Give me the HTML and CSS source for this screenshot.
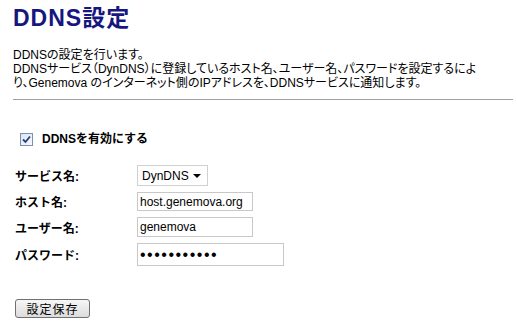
FILE: index.html
```html
<!DOCTYPE html>
<html lang="ja">
<head>
  <meta charset="UTF-8" />
  <title>DDNS設定</title>
  <link rel="stylesheet" href="styles.css">
</head>
<body>
  <h1 class="title">DDNS設定</h1>
  <p class="intro">
    DDNSの設定を行います。<br>
    DDNSサービス（DynDNS）に登録しているホスト名、ユーザー名、パスワードを設定するによ<br>
    り、Genemova のインターネット側のIPアドレスを、DDNSサービスに通知します。
  </p>
  <hr class="rule">

  <label class="enable">
    <input type="checkbox" checked>
    <span class="box">
      <svg width="9" height="9" viewBox="0 0 9 9"><path d="M1 4.5 L3.5 7 L8 1.5" fill="none" stroke="#1d3f8a" stroke-width="1.8"/></svg>
    </span>
    <span>DDNSを有効にする</span>
  </label>

  <div class="form">
    <div class="label">サービス名:</div>
    <div class="field">
      <span class="select">
        <select>
          <option>DynDNS</option>
        </select>
      </span>
    </div>

    <div class="label">ホスト名:</div>
    <div class="field"><input class="text host" type="text" value="host.genemova.org"></div>

    <div class="label">ユーザー名:</div>
    <div class="field"><input class="text user" type="text" value="genemova"></div>

    <div class="label">パスワード:</div>
    <div class="field"><input class="text pass" type="password" value="genemova123"></div>
  </div>

  <button class="save">設定保存</button>
</body>
</html>
```

FILE: styles.css
```css
body {
  margin: 0;
  padding: 5px 4px 0 13px;
  font-family: "Liberation Sans", "Noto Sans CJK JP", sans-serif;
  font-size: 12px;
  color: #000;
  background: #fff;
}
.title {
  margin: 0;
  font-size: 23px;
  line-height: 26px;
  font-weight: bold;
  letter-spacing: 1px;
  color: #16167f;
}
.intro {
  margin: 17px 0 0;
  line-height: 14px;
  white-space: nowrap;
  font-feature-settings: "palt";
}
.rule {
  margin: 9px 0 0;
  width: 500px;
  border: 0;
  border-top: 1px solid #a0a0a0;
  height: 0;
}
.enable {
  display: flex;
  align-items: center;
  gap: 9px;
  margin: 33px 0 0 7px;
  font-weight: bold;
  line-height: 13px;
}
.enable input {
  display: none;
}
.box {
  box-sizing: border-box;
  display: flex;
  align-items: center;
  justify-content: center;
  width: 13px;
  height: 13px;
  border: 1px solid #7d8fb0;
  background: linear-gradient(135deg, #dfe4ee, #f8f9fc);
}
.form {
  display: grid;
  grid-template-columns: 122px auto;
  row-gap: 6px;
  align-items: center;
  margin: 19px 0 0 2px;
}
.label {
  font-weight: bold;
}
.field {
  display: flex;
}
.select {
  position: relative;
  display: inline-block;
}
.select select {
  appearance: none;
  width: 71px;
  height: 21px;
  padding: 0 0 0 4px;
  border: 1px solid #d0d0d0;
  background: #fff;
  font-family: inherit;
  font-size: 12px;
  color: #000;
}
.select::after {
  content: "";
  position: absolute;
  right: 7px;
  top: 9px;
  border-left: 4px solid transparent;
  border-right: 4px solid transparent;
  border-top: 4px solid #000;
  pointer-events: none;
}
.text {
  box-sizing: border-box;
  margin: 0;
  padding: 0 2px;
  border: 1px solid #c8c8c8;
  font-family: inherit;
  font-size: 12px;
  color: #000;
}
.host {
  width: 116px;
  height: 19px;
}
.user {
  width: 116px;
  height: 20px;
}
.pass {
  width: 147px;
  height: 23px;
  font-size: 16px;
  letter-spacing: 1.5px;
}
.save {
  display: block;
  margin: 33px 0 0 2px;
  width: 75px;
  height: 19px;
  padding: 0;
  font-family: inherit;
  font-size: 12px;
  letter-spacing: 1px;
  color: #000;
  border: 1px solid #707070;
  border-radius: 3px;
  background: linear-gradient(#f6f6f6, #dcdcdc);
}
```
